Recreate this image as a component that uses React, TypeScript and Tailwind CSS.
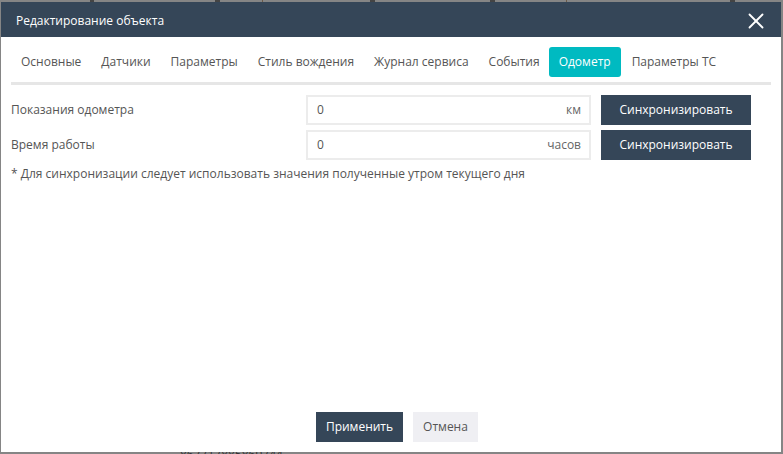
import { X } from "lucide-react";

const tabs = [
  "Основные",
  "Датчики",
  "Параметры",
  "Стиль вождения",
  "Журнал сервиса",
  "События",
  "Одометр",
  "Параметры ТС",
];

function OdometerRow({ label, unit }: { label: string; unit: string }) {
  return (
    <div className="flex h-[30px] items-center">
      <span className="w-[295px] shrink-0 text-[#555]">{label}</span>
      <div className="flex h-full w-[285px] items-center justify-between border-2 border-[#ececec] pr-[8px] pl-[9px]">
        <span className="text-[#555]">0</span>
        <span className="text-[#666]">{unit}</span>
      </div>
      <button
        type="button"
        className="ml-[10px] h-full w-[150px] bg-[#354658] text-white"
      >
        Синхронизировать
      </button>
    </div>
  );
}

export default function App() {
  return (
    <div className="h-[454px] w-[783px] overflow-hidden bg-[#858585] font-['Open_Sans',sans-serif] text-[12px]">
      {/* page behind the dialog, only a sliver shows */}
      <div className="flex h-[2px] items-start">
        <span className="ml-[90px] h-[2px] w-[4px] bg-[#444]" />
        <span className="ml-[121px] h-[2px] w-[5px] bg-[#444]" />
        <span className="ml-[42px] h-[2px] w-[1px] bg-[#6b5a48]" />
        <span className="ml-[107px] h-[2px] w-[5px] bg-[#444]" />
        <span className="ml-[115px] h-[2px] w-[5px] bg-[#444]" />
        <span className="ml-[71px] h-[2px] w-[1px] bg-[#6b5a48]" />
        <span className="ml-[163px] h-[2px] w-[5px] bg-[#444]" />
      </div>

      <div className="ml-[1px] flex h-[450px] w-[780px] flex-col bg-white">
        <header className="flex h-[35px] shrink-0 items-center justify-between bg-[#354658] pt-[2px] pr-[12px] pl-[15px] text-white">
          <span>Редактирование объекта</span>
          <X className="size-[26px]" strokeWidth={1.7} />
        </header>

        <div className="flex min-h-0 flex-1 flex-col px-[10px]">
          <nav className="mt-[10px] flex h-[38px] shrink-0 items-start border-b-[3px] border-[#e6e6e6] pb-[5px]">
            {tabs.map((tab) => (
              <span
                key={tab}
                className={
                  tab === "Одометр"
                    ? "-ml-px mr-px flex h-[30px] items-center rounded-[3px] bg-[#00bac1] px-[10px] text-white"
                    : "flex h-[30px] items-center px-[10px] text-[#555]"
                }
              >
                {tab}
              </span>
            ))}
          </nav>

          <div className="mt-[10px] flex flex-col gap-[5px]">
            <OdometerRow label="Показания одометра" unit="км" />
            <OdometerRow label="Время работы" unit="часов" />
          </div>

          <p className="mt-[5px] text-[#555]">
            * Для синхронизации следует использовать значения полученные утром текущего дня
          </p>

          <footer className="mt-auto mb-[10px] flex justify-center gap-[10px] pl-[12px]">
            <button type="button" className="h-[30px] w-[87px] bg-[#354658] text-white">
              Применить
            </button>
            <button type="button" className="h-[30px] w-[65px] bg-[#efeff3] text-[#555]">
              Отмена
            </button>
          </footer>
        </div>
      </div>

      <div className="h-[2px] overflow-hidden pl-[180px] text-[#333]">
        <div className="-mt-[3px] leading-[12px]">867717885869744</div>
      </div>
    </div>
  );
}
